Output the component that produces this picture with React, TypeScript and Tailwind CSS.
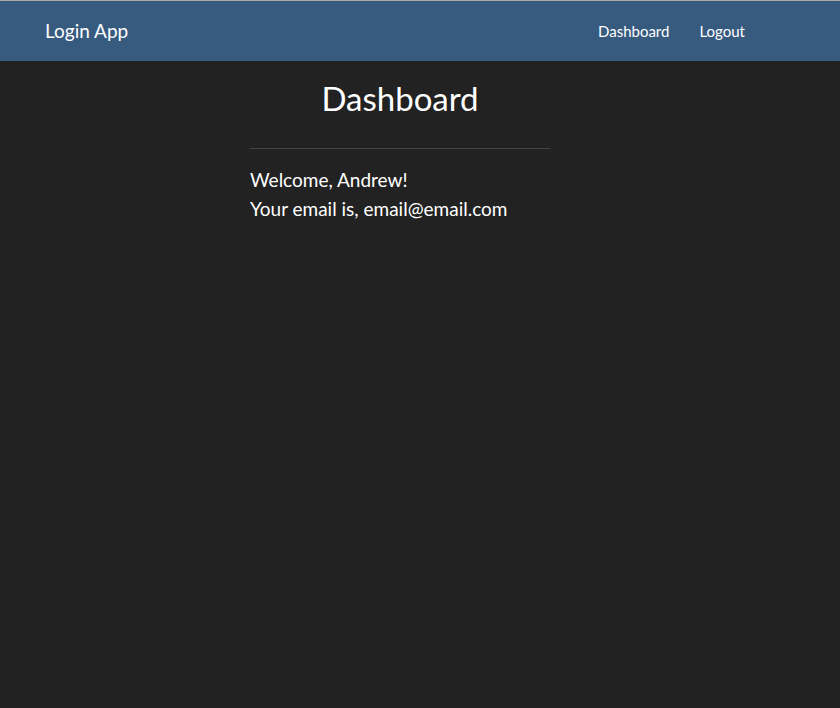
export default function App() {
  return (
    <div className="min-h-[708px] bg-[#222222] text-white font-['Lato',sans-serif] border-t border-[#a9a9a9]">
      {/* Navbar */}
      <nav className="h-[60px] bg-[#375a7f] flex items-center justify-between pl-[45px] pr-[95px]">
        <span className="text-[19px]">Login App</span>
        <div className="flex items-center gap-[30px] text-[15px]">
          <span>Dashboard</span>
          <span>Logout</span>
        </div>
      </nav>

      {/* Content */}
      <div className="w-[300px] ml-[250px]">
        <h1 className="text-[33px] text-center leading-[1.2] mt-[18px]">Dashboard</h1>
        <hr className="border-t border-[#444444] mt-[29px] mb-[16px]" />
        <p className="text-[19px] leading-[29px]">Welcome, Andrew!</p>
        <p className="text-[19px] leading-[29px]">Your email is, email@email.com</p>
      </div>
    </div>
  );
}
